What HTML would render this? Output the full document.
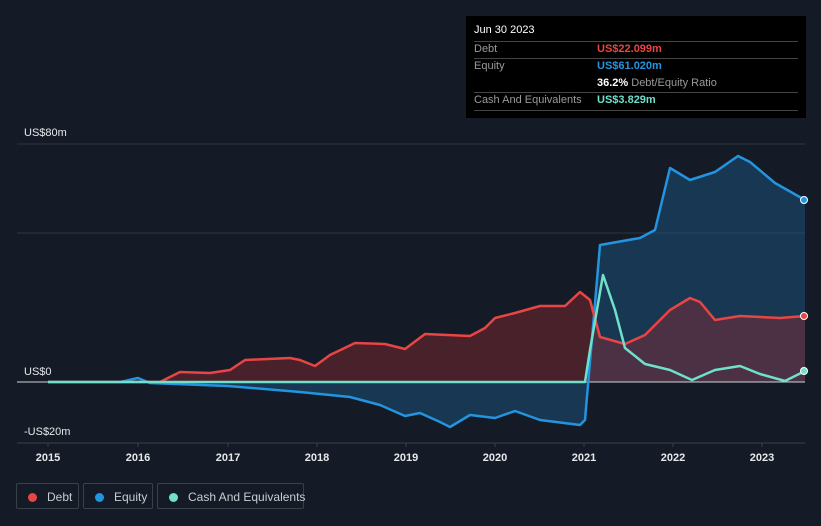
<!DOCTYPE html><html><head><style>
body{margin:0;width:821px;height:526px;background:#151b26;font-family:"Liberation Sans",sans-serif;overflow:hidden;position:relative}
.t{position:absolute;left:466px;top:16px;width:340px;height:102px;background:#000;color:#fff;font-size:11px}
.r{position:absolute;left:8px;width:324px;border-top:1px solid #444}
.lab{position:absolute;left:8px;color:#9a9a9a}
.val{position:absolute;left:131px;font-weight:bold}
.lg{position:absolute;top:483px;height:26px;border:1px solid #3a404a;border-radius:2px;color:#c8ccd2;font-size:12px;line-height:26px;box-sizing:border-box;white-space:nowrap}
.lg i{display:inline-block;width:9px;height:9px;border-radius:50%;margin:0 10px 0 11px;vertical-align:-1px}
</style></head><body>
<svg width="821" height="526" style="position:absolute;left:0;top:0">
<line x1="17" y1="144" x2="805" y2="144" stroke="#2e3440"/>
<line x1="17" y1="233" x2="805" y2="233" stroke="#2e3440"/>
<line x1="17" y1="443" x2="805" y2="443" stroke="#3a404a"/>
<g stroke="#3a404a"><line x1="48" y1="443" x2="48" y2="447"/><line x1="138" y1="443" x2="138" y2="447"/><line x1="228" y1="443" x2="228" y2="447"/><line x1="317" y1="443" x2="317" y2="447"/><line x1="406" y1="443" x2="406" y2="447"/><line x1="495" y1="443" x2="495" y2="447"/><line x1="584" y1="443" x2="584" y2="447"/><line x1="673" y1="443" x2="673" y2="447"/><line x1="762" y1="443" x2="762" y2="447"/></g>
<polygon fill="#1d5a8a" fill-opacity="0.45" points="48,382 120,382 138,378 150,383 228,386 300,392 350,397 380,405 405,416 420,413 440,422 450,427 470,415 495,418 515,411 540,420 580,425 585,420 600,245 640,238 655,230 670,168 690,180 715,172 738,156 750,162 775,183 805,200 805,382"/>
<polygon fill="#8a2a30" fill-opacity="0.45" points="48,382 160,382 180,372 210,373 230,370 245,360 290,358 300,360 315,366 330,355 355,343 385,344 405,349 425,334 470,336 485,328 495,318 515,313 540,306 565,306 580,292 590,300 600,337 625,344 645,335 670,310 690,298 700,302 715,320 740,316 780,318 805,316 805,382"/>
<line x1="17" y1="382" x2="805" y2="382" stroke="#cfd3d9"/>
<polyline fill="none" stroke="#2394df" stroke-width="2.5" stroke-linejoin="round" points="48,382 120,382 138,378 150,383 228,386 300,392 350,397 380,405 405,416 420,413 440,422 450,427 470,415 495,418 515,411 540,420 580,425 585,420 600,245 640,238 655,230 670,168 690,180 715,172 738,156 750,162 775,183 805,200"/>
<polyline fill="none" stroke="#e84545" stroke-width="2.5" stroke-linejoin="round" points="48,382 160,382 180,372 210,373 230,370 245,360 290,358 300,360 315,366 330,355 355,343 385,344 405,349 425,334 470,336 485,328 495,318 515,313 540,306 565,306 580,292 590,300 600,337 625,344 645,335 670,310 690,298 700,302 715,320 740,316 780,318 805,316"/>
<polyline fill="none" stroke="#6ee0cc" stroke-width="2.5" stroke-linejoin="round" points="48,382 585,382 590,350 603,275 615,310 625,348 645,364 670,370 692,380 715,370 740,366 760,374 785,381 805,371"/>
<circle cx="804" cy="200" r="3.5" fill="#2394df" stroke="#fff"/>
<circle cx="804" cy="316" r="3.5" fill="#e84545" stroke="#fff"/>
<circle cx="804" cy="371" r="3.5" fill="#6ee0cc" stroke="#fff"/>
<g fill="#e6e8eb" font-size="11" font-family="Liberation Sans">
<text x="24" y="136">US$80m</text><text x="24" y="375">US$0</text><text x="24" y="435">-US$20m</text>
<g text-anchor="middle" font-weight="bold" font-size="11"><text x="48" y="461">2015</text><text x="138" y="461">2016</text><text x="228" y="461">2017</text><text x="317" y="461">2018</text><text x="406" y="461">2019</text><text x="495" y="461">2020</text><text x="584" y="461">2021</text><text x="673" y="461">2022</text><text x="762" y="461">2023</text></g>
</g></svg>
<div class="t">
<div style="position:absolute;left:8px;top:8px">Jun 30 2023</div>
<div class="r" style="top:25px"></div>
<div class="lab" style="top:27px">Debt</div><div class="val" style="top:27px;color:#e84545">US$22.099m</div>
<div class="r" style="top:42px"></div>
<div class="lab" style="top:44px">Equity</div><div class="val" style="top:44px;color:#2394df">US$61.020m</div>
<div class="val" style="top:61px;color:#fff">36.2% <span style="color:#9a9a9a;font-weight:normal">Debt/Equity Ratio</span></div>
<div class="r" style="top:76px"></div>
<div class="lab" style="top:78px">Cash And Equivalents</div><div class="val" style="top:78px;color:#6ee0cc">US$3.829m</div>
<div class="r" style="top:94px"></div>
</div>
<div class="lg" style="left:16px;width:63px"><i style="background:#e84545"></i>Debt</div>
<div class="lg" style="left:83px;width:70px"><i style="background:#2394df"></i>Equity</div>
<div class="lg" style="left:157px;width:147px"><i style="background:#6ee0cc"></i>Cash And Equivalents</div>
</body></html>
